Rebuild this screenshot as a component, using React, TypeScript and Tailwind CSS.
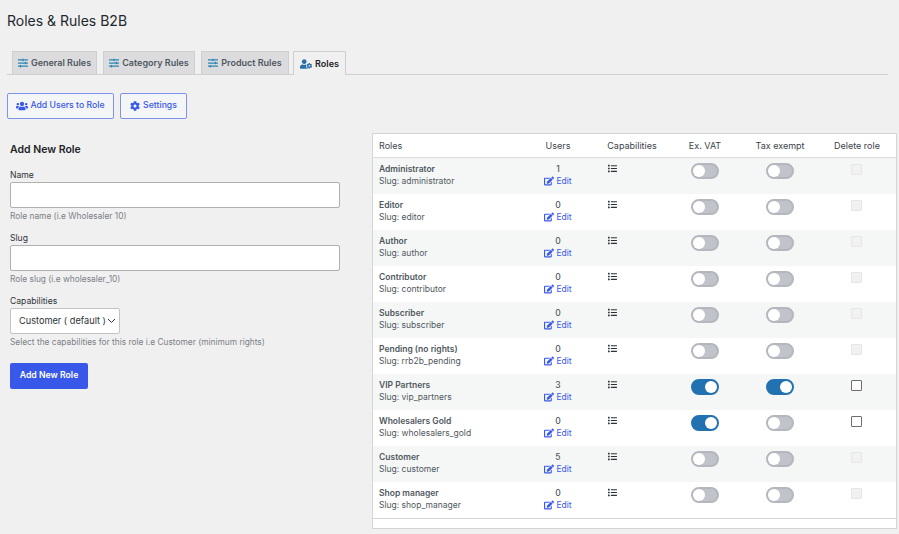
import { FaCog, FaEdit, FaList, FaSlidersH, FaUserCog, FaUsers } from "react-icons/fa";

type Role = { name: string; slug: string; users: number; vat?: boolean; tax?: boolean; del?: boolean };

const roles: Role[] = [
  { name: "Administrator", slug: "administrator", users: 1 },
  { name: "Editor", slug: "editor", users: 0 },
  { name: "Author", slug: "author", users: 0 },
  { name: "Contributor", slug: "contributor", users: 0 },
  { name: "Subscriber", slug: "subscriber", users: 0 },
  { name: "Pending (no rights)", slug: "rrb2b_pending", users: 0 },
  { name: "VIP Partners", slug: "vip_partners", users: 3, vat: true, tax: true, del: true },
  { name: "Wholesalers Gold", slug: "wholesalers_gold", users: 0, vat: true, del: true },
  { name: "Customer", slug: "customer", users: 5 },
  { name: "Shop manager", slug: "shop_manager", users: 0 },
];

const cols = "grid grid-cols-[150px_70px_78px_68px_82px_72px]";

function Toggle({ on }: { on?: boolean }) {
  return (
    <span className={`flex h-4 w-7 items-center rounded-full border-2 ${on ? "justify-end border-[#2271b1] bg-[#2271b1]" : "justify-start border-[#b4b7bd] bg-[#c0c3c9]"}`}>
      <span className="h-3 w-3 rounded-full bg-white" />
    </span>
  );
}

function Tab({ label, width, active }: { label: string; width: string; active?: boolean }) {
  if (active) {
    return (
      <div className={`-mb-px flex h-[24px] items-center justify-center gap-[3px] border border-b-0 border-[#cfcfcf] bg-[#f0f0f0] text-[#1d2327] ${width}`}>
        <FaUserCog className="text-[12px] text-[#2a6fa8]" />
        <span>{label}</span>
      </div>
    );
  }
  return (
    <div className={`flex h-[23px] items-center justify-center gap-[3px] border border-b-0 border-[#cfcfcf] bg-[#dcdcde] text-[#50575e] ${width}`}>
      <FaSlidersH className="text-[10px] text-[#2b86b5]" />
      <span>{label}</span>
    </div>
  );
}

function Field({ label, hint }: { label: string; hint: string }) {
  return (
    <div className="mb-[9px]">
      <div className="mb-px text-[8.6px] leading-[12px] text-[#2c3338]">{label}</div>
      <input className="block h-[26px] w-[330px] rounded-[2px] border border-[#b0b0b0] bg-white" />
      <div className="mt-px text-[8.35px] leading-[14px] text-[#7b8087]">{hint}</div>
    </div>
  );
}

export default function App() {
  return (
    <div className="h-[534px] w-[899px] overflow-hidden bg-[#f0f0f0] font-['Inter','Liberation_Sans',sans-serif] text-[#2c3338]">
      <h1 className="pl-[7px] pt-[11px] text-[14px] leading-[19px] text-[#23282d]">Roles &amp; Rules B2B</h1>

      <div className="ml-[7px] mr-[11px] mt-[21px] flex h-[24px] items-end gap-[6px] border-b border-[#cfcfcf] pl-[5px] text-[9px] font-semibold">
        <Tab label="General Rules" width="w-[85px]" />
        <Tab label="Category Rules" width="w-[92px]" />
        <Tab label="Product Rules" width="w-[88px]" />
        <div className="-ml-[2px]">
          <Tab label="Roles" width="w-[53px]" active />
        </div>
      </div>

      <div className="ml-[7px] mt-[18px] flex gap-[6px] text-[8.7px] font-medium text-[#3858e9]">
        <button className="flex h-[26px] w-[107px] items-center justify-center gap-[2px] rounded-[2px] border border-[#7f92f0] bg-[#f3f5f6]">
          <FaUsers className="text-[12px]" /> Add Users to Role
        </button>
        <button className="flex h-[26px] w-[67px] items-center justify-center gap-[3px] rounded-[2px] border border-[#7f92f0] bg-[#f3f5f6]">
          <FaCog className="text-[10px]" /> Settings
        </button>
      </div>

      <div className="mt-[14px] flex">
        <div className="ml-[10px] w-[362px] pt-[10px]">
          <h2 className="mb-[12px] text-[10.5px] font-semibold leading-[14px] text-[#1d2327]">Add New Role</h2>
          <Field label="Name" hint="Role name (i.e Wholesaler 10)" />
          <Field label="Slug" hint="Role slug (i.e wholesaler_10)" />
          <div className="mb-px text-[8.6px] leading-[12px]">Capabilities</div>
          <div className="flex h-[26px] w-[110px] items-center justify-between whitespace-nowrap rounded-[2px] border border-[#c4c4c4] bg-white pl-[8px] pr-[3px] text-[9.2px]">
            <span>Customer ( default )</span>
            <svg width="9" height="6" viewBox="0 0 9 6" fill="none" stroke="#2c3338" strokeWidth="1"><path d="M1 1l3.5 3.5L8 1" /></svg>
          </div>
          <div className="mt-px text-[8.35px] leading-[14px] text-[#7b8087]">Select the capabilities for this role i.e Customer (minimum rights)</div>
          <button className="mt-[14px] h-[26px] w-[78px] rounded-[2px] bg-[#3858e9] text-[8.7px] font-semibold text-white">Add New Role</button>
        </div>

        <div className="h-[396px] w-[525px] border border-[#d5d5d5] bg-white">
          <div className={`${cols} h-[24px] items-center border-b border-[#dcdcdc] text-center text-[9px] text-[#3c434a]`}>
            <div className="pl-[6px] text-left">Roles</div>
            <div>Users</div>
            <div>Capabilities</div>
            <div>Ex. VAT</div>
            <div>Tax exempt</div>
            <div>Delete role</div>
          </div>
          {roles.map((r, i) => (
            <div key={r.slug} className={`${cols} h-[36px] pt-[5px] text-[8.5px] leading-[12px] ${i % 2 === 0 ? "bg-[#f5f7f7]" : "bg-white"}`}>
              <div className="pl-[6px]">
                <div className="font-semibold text-[#50575e]">{r.name}</div>
                <div className="text-[#50575e]">Slug: {r.slug}</div>
              </div>
              <div className="text-center">
                <div className="font-medium text-[#50575e]">{r.users}</div>
                <div className="flex items-center justify-center gap-[2px] text-[#3858e9]"><FaEdit className="text-[10px]" />Edit</div>
              </div>
              <div className="pl-[15px] pt-[1px]"><FaList className="text-[9px] text-[#2c3338]" /></div>
              <div className="flex justify-center"><Toggle on={r.vat} /></div>
              <div className="flex justify-center"><Toggle on={r.tax} /></div>
              <div className="flex justify-center pr-[2px]">
                <span className={`mt-px h-[11px] w-[11px] rounded-[1px] border ${r.del ? "border-[#6e6e6e] bg-white" : "border-[#e6e6e6] bg-[#f1f1f1]"}`} />
              </div>
            </div>
          ))}
          <div className="border-t border-[#d5d5d5]" />
        </div>
      </div>
    </div>
  );
}
